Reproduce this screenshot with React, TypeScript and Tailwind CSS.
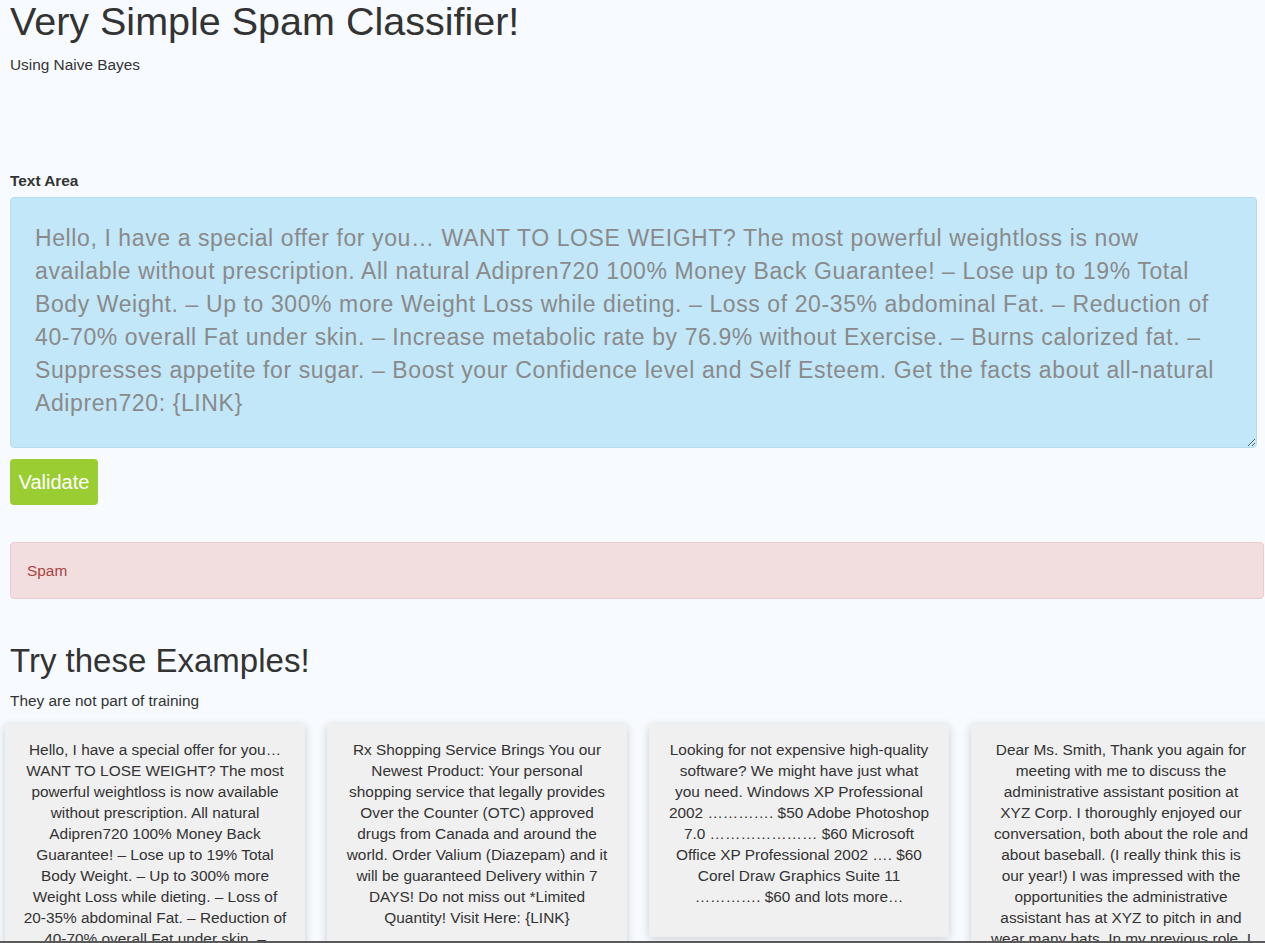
const spamText =
  "Hello, I have a special offer for you… WANT TO LOSE WEIGHT? The most powerful weightloss is now available without prescription. All natural Adipren720 100% Money Back Guarantee! – Lose up to 19% Total Body Weight. – Up to 300% more Weight Loss while dieting. – Loss of 20-35% abdominal Fat. – Reduction of 40-70% overall Fat under skin. – Increase metabolic rate by 76.9% without Exercise. – Burns calorized fat. – Suppresses appetite for sugar. – Boost your Confidence level and Self Esteem. Get the facts about all-natural Adipren720: {LINK}";

const examples = [
  spamText,
  "Rx Shopping Service Brings You our Newest Product: Your personal shopping service that legally provides Over the Counter (OTC) approved drugs from Canada and around the world. Order Valium (Diazepam) and it will be guaranteed Delivery within 7 DAYS! Do not miss out *Limited Quantity! Visit Here: {LINK}",
  "Looking for not expensive high-quality software? We might have just what you need. Windows XP Professional 2002 …………. $50 Adobe Photoshop 7.0 ………………… $60 Microsoft Office XP Professional 2002 …. $60 Corel Draw Graphics Suite 11 …………. $60 and lots more…",
  "Dear Ms. Smith, Thank you again for meeting with me to discuss the administrative assistant position at XYZ Corp. I thoroughly enjoyed our conversation, both about the role and about baseball. (I really think this is our year!) I was impressed with the opportunities the administrative assistant has at XYZ to pitch in and wear many hats. In my previous role, I was responsible for scheduling, correspondence and client relations. Please let me know if you need anything else from me.",
];

export default function App() {
  return (
    <div className="flex h-[943px] flex-col overflow-hidden bg-[#f7fbff] font-['Liberation_Sans',Arial,sans-serif] text-[#333]">
      <div className="flex-1 overflow-hidden px-[10px]">
        {/* Header */}
        <h1 className="m-0 text-[39.5px] leading-[1.1] font-normal">Very Simple Spam Classifier!</h1>
        <p className="mt-[11px] text-[15.4px] leading-[22px]">Using Naive Bayes</p>

        {/* Form */}
        <label className="mt-[94px] mb-[5px] block text-[15.4px] leading-[22px] font-bold">Text Area</label>
        <textarea
          readOnly
          defaultValue={spamText}
          className="block h-[251px] w-[1247px] resize-y rounded-[4px] border border-[#b5dcef] bg-[#c1e7f9] px-[24px] pt-[24px] font-['Liberation_Sans',Arial,sans-serif] text-[23px] leading-[33px] tracking-[0.6px] text-[#8a8a8a] outline-none"
        />
        <button className="mt-[11px] h-[46px] w-[88px] rounded-[4px] bg-[#9acd32] text-[20px] text-white">
          Validate
        </button>

        {/* Result */}
        <div className="mt-[37px] w-[1254px] rounded-[4px] border border-[#ebccd1] bg-[#f2dede] px-[16px] py-[16.5px] text-[15.4px] leading-[22px] text-[#a94442]">
          Spam
        </div>

        {/* Examples */}
        <h2 className="mt-[44px] text-[33px] leading-[1.1] font-normal">Try these Examples!</h2>
        <p className="mt-[10px] text-[15.4px] leading-[22px]">They are not part of training</p>

        <div className="-ml-[5px] mt-[12px] flex items-start gap-[22px]">
          {examples.map((t, i) => (
            <div
              key={i}
              className="w-[300px] shrink-0 rounded-[2px] bg-[#f0f0f0] px-[17px] pt-[15px] pb-[30px] text-center text-[15.4px] leading-[21px] text-[#333] shadow-[0_2px_10px_rgba(0,0,0,0.18)]"
            >
              {t}
            </div>
          ))}
        </div>
      </div>
      <div className="h-[2px] shrink-0 bg-[#5a5a5a]" />
    </div>
  );
}
